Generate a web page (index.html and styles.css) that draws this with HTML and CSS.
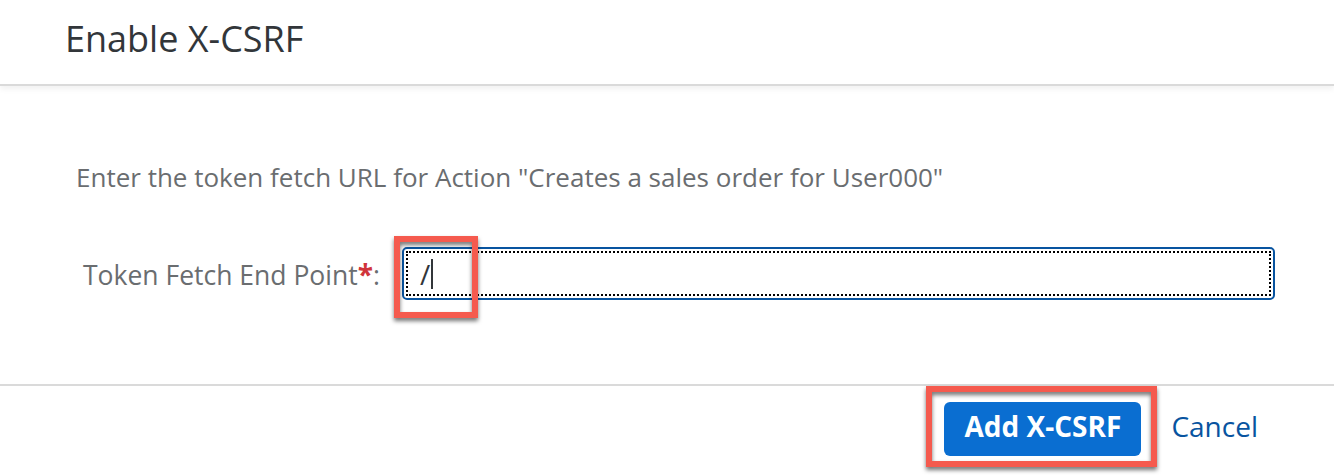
FILE: index.html
```html
<!DOCTYPE html>
<html>
<head>
<meta charset="utf-8">
<link rel="stylesheet" href="styles.css">
</head>
<body>
<div class="dialog">
  <header class="header">
    <h1 class="title">Enable X-CSRF</h1>
  </header>
  <main class="content">
    <p class="intro">Enter the token fetch URL for Action "Creates a sales order for User000"</p>
    <div class="form-row">
      <label class="label">Token Fetch End Point<span class="req">*</span>:</label>
      <div class="input-wrap">
        <div class="input"><div class="focus-ring"><span class="value">/</span><span class="caret"></span></div></div>
        <div class="mark mark-input"></div>
      </div>
    </div>
  </main>
  <footer class="footer">
    <div class="btn-wrap">
      <button class="btn-primary">Add X-CSRF</button>
      <div class="mark mark-btn"></div>
    </div>
    <a class="link">Cancel</a>
  </footer>
</div>
</body>
</html>
```
FILE: styles.css
```css
html, body {
  margin: 0;
  padding: 0;
  background: #ffffff;
}
body {
  font-family: "Open Sans", "Liberation Sans", Arial, sans-serif;
  width: 1334px;
  height: 476px;
  overflow: hidden;
}
.dialog {
  display: flex;
  flex-direction: column;
  height: 476px;
}
.header {
  height: 86px;
  box-sizing: border-box;
  display: flex;
  align-items: flex-start;
  padding-left: 65px;
  padding-top: 17px;
  border-bottom: 2px solid #dadada;
  box-shadow: 0 3px 6px rgba(0, 0, 0, 0.06);
  position: relative;
  z-index: 1;
}
.title {
  margin: 0;
  font-weight: normal;
  font-size: 36px;
  line-height: 44px;
  color: #32363a;
}
.content {
  height: 298px;
  box-sizing: border-box;
  padding-top: 76px;
}
.intro {
  margin: 0 0 0 76px;
  font-size: 26px;
  line-height: 30px;
  color: #6a6d70;
}
.form-row {
  display: flex;
  align-items: center;
  margin-top: 55px;
  padding-left: 83px;
}
.label {
  font-size: 26.5px;
  color: #6a6d70;
  width: 319px;
  white-space: nowrap;
}
.req {
  color: #d0343a;
  font-weight: bold;
  font-size: 28px;
}
.input-wrap {
  position: relative;
}
.input {
  width: 873px;
  height: 53px;
  box-sizing: border-box;
  border: 2px solid #0854a0;
  border-radius: 5px;
  padding: 2px;
  background: #fff;
}
.focus-ring {
  height: 100%;
  box-sizing: border-box;
  border: 2px dotted #000;
  display: flex;
  align-items: center;
  padding-left: 12px;
}
.value {
  font-size: 28px;
  color: #32363a;
  line-height: 30px;
}
.caret {
  width: 2px;
  height: 30px;
  background: #32363a;
  margin-left: 1px;
}
.mark {
  position: absolute;
  border: 6px solid #f55a4e;
  box-sizing: border-box;
  filter: drop-shadow(0 3px 2px rgba(0, 0, 0, 0.55));
}
.mark-input {
  left: -8px;
  top: -11px;
  width: 84px;
  height: 82px;
}
.footer {
  flex: 1;
  border-top: 2px solid #dadada;
  display: flex;
  align-items: flex-start;
  justify-content: flex-end;
  padding-top: 16px;
  padding-right: 76px;
}
.btn-wrap {
  position: relative;
}
.btn-primary {
  display: block;
  width: 197px;
  height: 54px;
  box-sizing: border-box;
  border: none;
  border-radius: 6px;
  background: #0a6ed1;
  color: #ffffff;
  font-family: "Open Sans", "Liberation Sans", Arial, sans-serif;
  font-weight: bold;
  font-size: 28px;
  padding: 0 0 6px 0;
  white-space: nowrap;
}
.mark-btn {
  left: -18px;
  top: -16px;
  width: 231px;
  height: 81px;
}
.link {
  margin-left: 30px;
  font-size: 28px;
  line-height: 48px;
  color: #0854a0;
}
```
